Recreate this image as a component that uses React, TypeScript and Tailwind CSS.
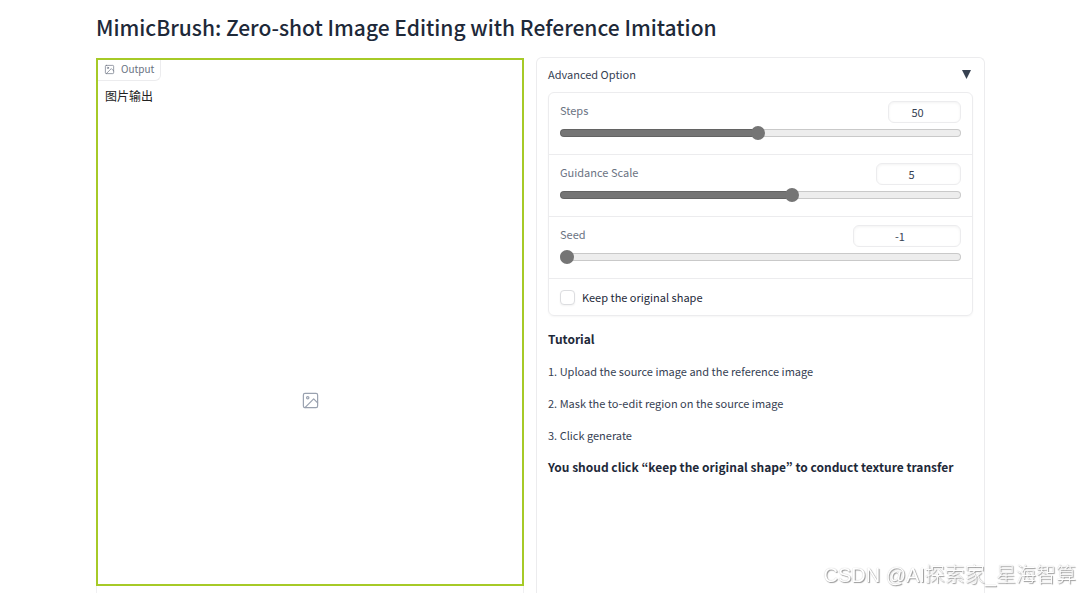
import { useState } from 'react'

interface SliderProps {
  id: string
  label: string
  min: number
  max: number
  initial: number
  inputClass: string
}

function ImageIcon({ className }: { className: string }) {
  return (
    <svg
      className={className}
      viewBox="0 0 24 24"
      fill="none"
      stroke="currentColor"
      strokeWidth="1.5"
      strokeLinecap="round"
      strokeLinejoin="round"
      aria-hidden="true"
    >
      <rect x="3" y="3" width="18" height="18" rx="2" />
      <circle cx="8.5" cy="8.5" r="1.5" />
      <polyline points="21 15 16 10 5 21" />
    </svg>
  )
}

// ── Slider row ───────────────────────────────────
function SliderRow({ id, label, min, max, initial, inputClass }: SliderProps) {
  const [value, setValue] = useState(initial)
  const percent = ((value - min) / (max - min)) * 100

  return (
    <div className="border-b border-[#ececee] px-[11px] pt-2 pb-[15px]">
      <div className="flex items-start justify-between">
        <label htmlFor={id} className="text-[11px] leading-[18px] text-gray-500">
          {label}
        </label>
        <input
          type="number"
          aria-label={`${label} value`}
          value={value}
          min={min}
          max={max}
          onChange={e => setValue(Number(e.target.value))}
          className={`h-[22px] rounded-md border border-[#ececee] bg-white pr-3.5 text-center text-[11px] text-gray-700 shadow-[inset_0_1px_3px_rgba(0,0,0,0.05)] outline-none [appearance:textfield] [&::-webkit-inner-spin-button]:appearance-none ${inputClass}`}
        />
      </div>
      <div className="mt-[3px] flex h-[13px] items-center">
        <input
          id={id}
          type="range"
          min={min}
          max={max}
          value={value}
          onChange={e => setValue(Number(e.target.value))}
          className="h-2 w-full appearance-none rounded-full border border-black/15 [&::-webkit-slider-thumb]:size-[14px] [&::-webkit-slider-thumb]:-translate-x-px [&::-webkit-slider-thumb]:appearance-none [&::-webkit-slider-thumb]:rounded-full [&::-webkit-slider-thumb]:bg-[#757575]"
          style={{
            background: `linear-gradient(to right, #757575 ${percent}%, #ededed ${percent}%) border-box`,
          }}
        />
      </div>
    </div>
  )
}

// ── Output panel ─────────────────────────────────
function OutputPanel() {
  return (
    <section className="flex flex-col pt-px">
      <div className="flex flex-1 flex-col border-2 border-[#a6ca27]">
        <div className="flex h-[21px] items-center gap-1.5 self-start rounded-br-md border-r border-b border-[#ececee] px-1.5 pb-0.5 text-[10px] leading-4 text-gray-500">
          <ImageIcon className="size-[11px]" />
          <span>Output</span>
        </div>
        <p className="mt-[7px] px-[7px] font-['Noto_Sans_CJK_SC',sans-serif] text-xs leading-4 text-[#222]">图片输出</p>
        <div className="flex flex-1 items-center justify-center pt-[113px]">
          <ImageIcon className="size-[19px] text-gray-400" />
        </div>
      </div>
      <div className="h-[7px] border-x border-[#f0f0f2]" />
    </section>
  )
}

// ── Advanced options ─────────────────────────────
function AdvancedPanel() {
  const [open, setOpen] = useState(true)

  return (
    <section className="rounded-t-md border border-b-0 border-[#ececee] px-[11px] pt-1.5 text-gray-800">
      <button
        type="button"
        aria-expanded={open}
        onClick={() => setOpen(!open)}
        className="flex w-full items-center justify-between pr-0.5 text-[11px] leading-5 text-gray-700"
      >
        <span>Advanced Option</span>
        <svg className="h-[9px] w-[9px]" viewBox="0 0 9 9" aria-hidden="true">
          <path d="M0 0h9L4.5 9z" fill="#374151" />
        </svg>
      </button>

      {open && (
        <div className="mt-2 rounded-md border border-[#ececee] shadow-[0_1px_2px_rgba(0,0,0,0.04)]">
          <SliderRow id="steps" label="Steps" min={1} max={100} initial={50} inputClass="w-[73px]" />
          <SliderRow id="guidance" label="Guidance Scale" min={-30} max={30} initial={5} inputClass="w-[85px]" />
          <SliderRow id="seed" label="Seed" min={-1} max={999999999} initial={-1} inputClass="w-[108px]" />
          <label className="flex h-9 items-center gap-[7px] px-[11px] text-[11px]">
            <input
              type="checkbox"
              className="size-[15px] appearance-none rounded border border-[#dcdde0] bg-white shadow-[0_1px_2px_rgba(0,0,0,0.05)] checked:bg-gray-600"
            />
            Keep the original shape
          </label>
        </div>
      )}

      <h2 className="mt-[13px] text-xs leading-5 font-bold">Tutorial</h2>
      <div className="mt-3 flex flex-col gap-3 text-[11px] leading-5 text-gray-700">
        <p>1. Upload the source image and the reference image</p>
        <p>2. Mask the to-edit region on the source image</p>
        <p>3. Click generate</p>
        <h3 className="text-xs leading-5 font-bold text-gray-800">
          You shoud click “keep the original shape” to conduct texture transfer
        </h3>
      </div>
    </section>
  )
}

export default function App() {
  return (
    <div className="flex min-h-screen flex-col bg-white pr-[95px] pl-24 font-['Noto_Sans_CJK_KR',sans-serif]">
      <h1 className="pt-[11px] pb-[14px] text-[21px] leading-8 font-medium text-gray-800">
        MimicBrush: Zero-shot Image Editing with Reference Imitation
      </h1>
      <main className="grid flex-1 grid-cols-[428fr_449fr] gap-3">
        <OutputPanel />
        <AdvancedPanel />
      </main>
      <div className="pointer-events-none fixed right-1 bottom-1 font-['Liberation_Sans','Noto_Sans_CJK_SC',sans-serif] text-xl leading-7 font-light text-white [text-shadow:1px_1px_1px_#999,0_0_1px_#bbb]">
        CSDN @AI探索家_星海智算
      </div>
    </div>
  )
}
